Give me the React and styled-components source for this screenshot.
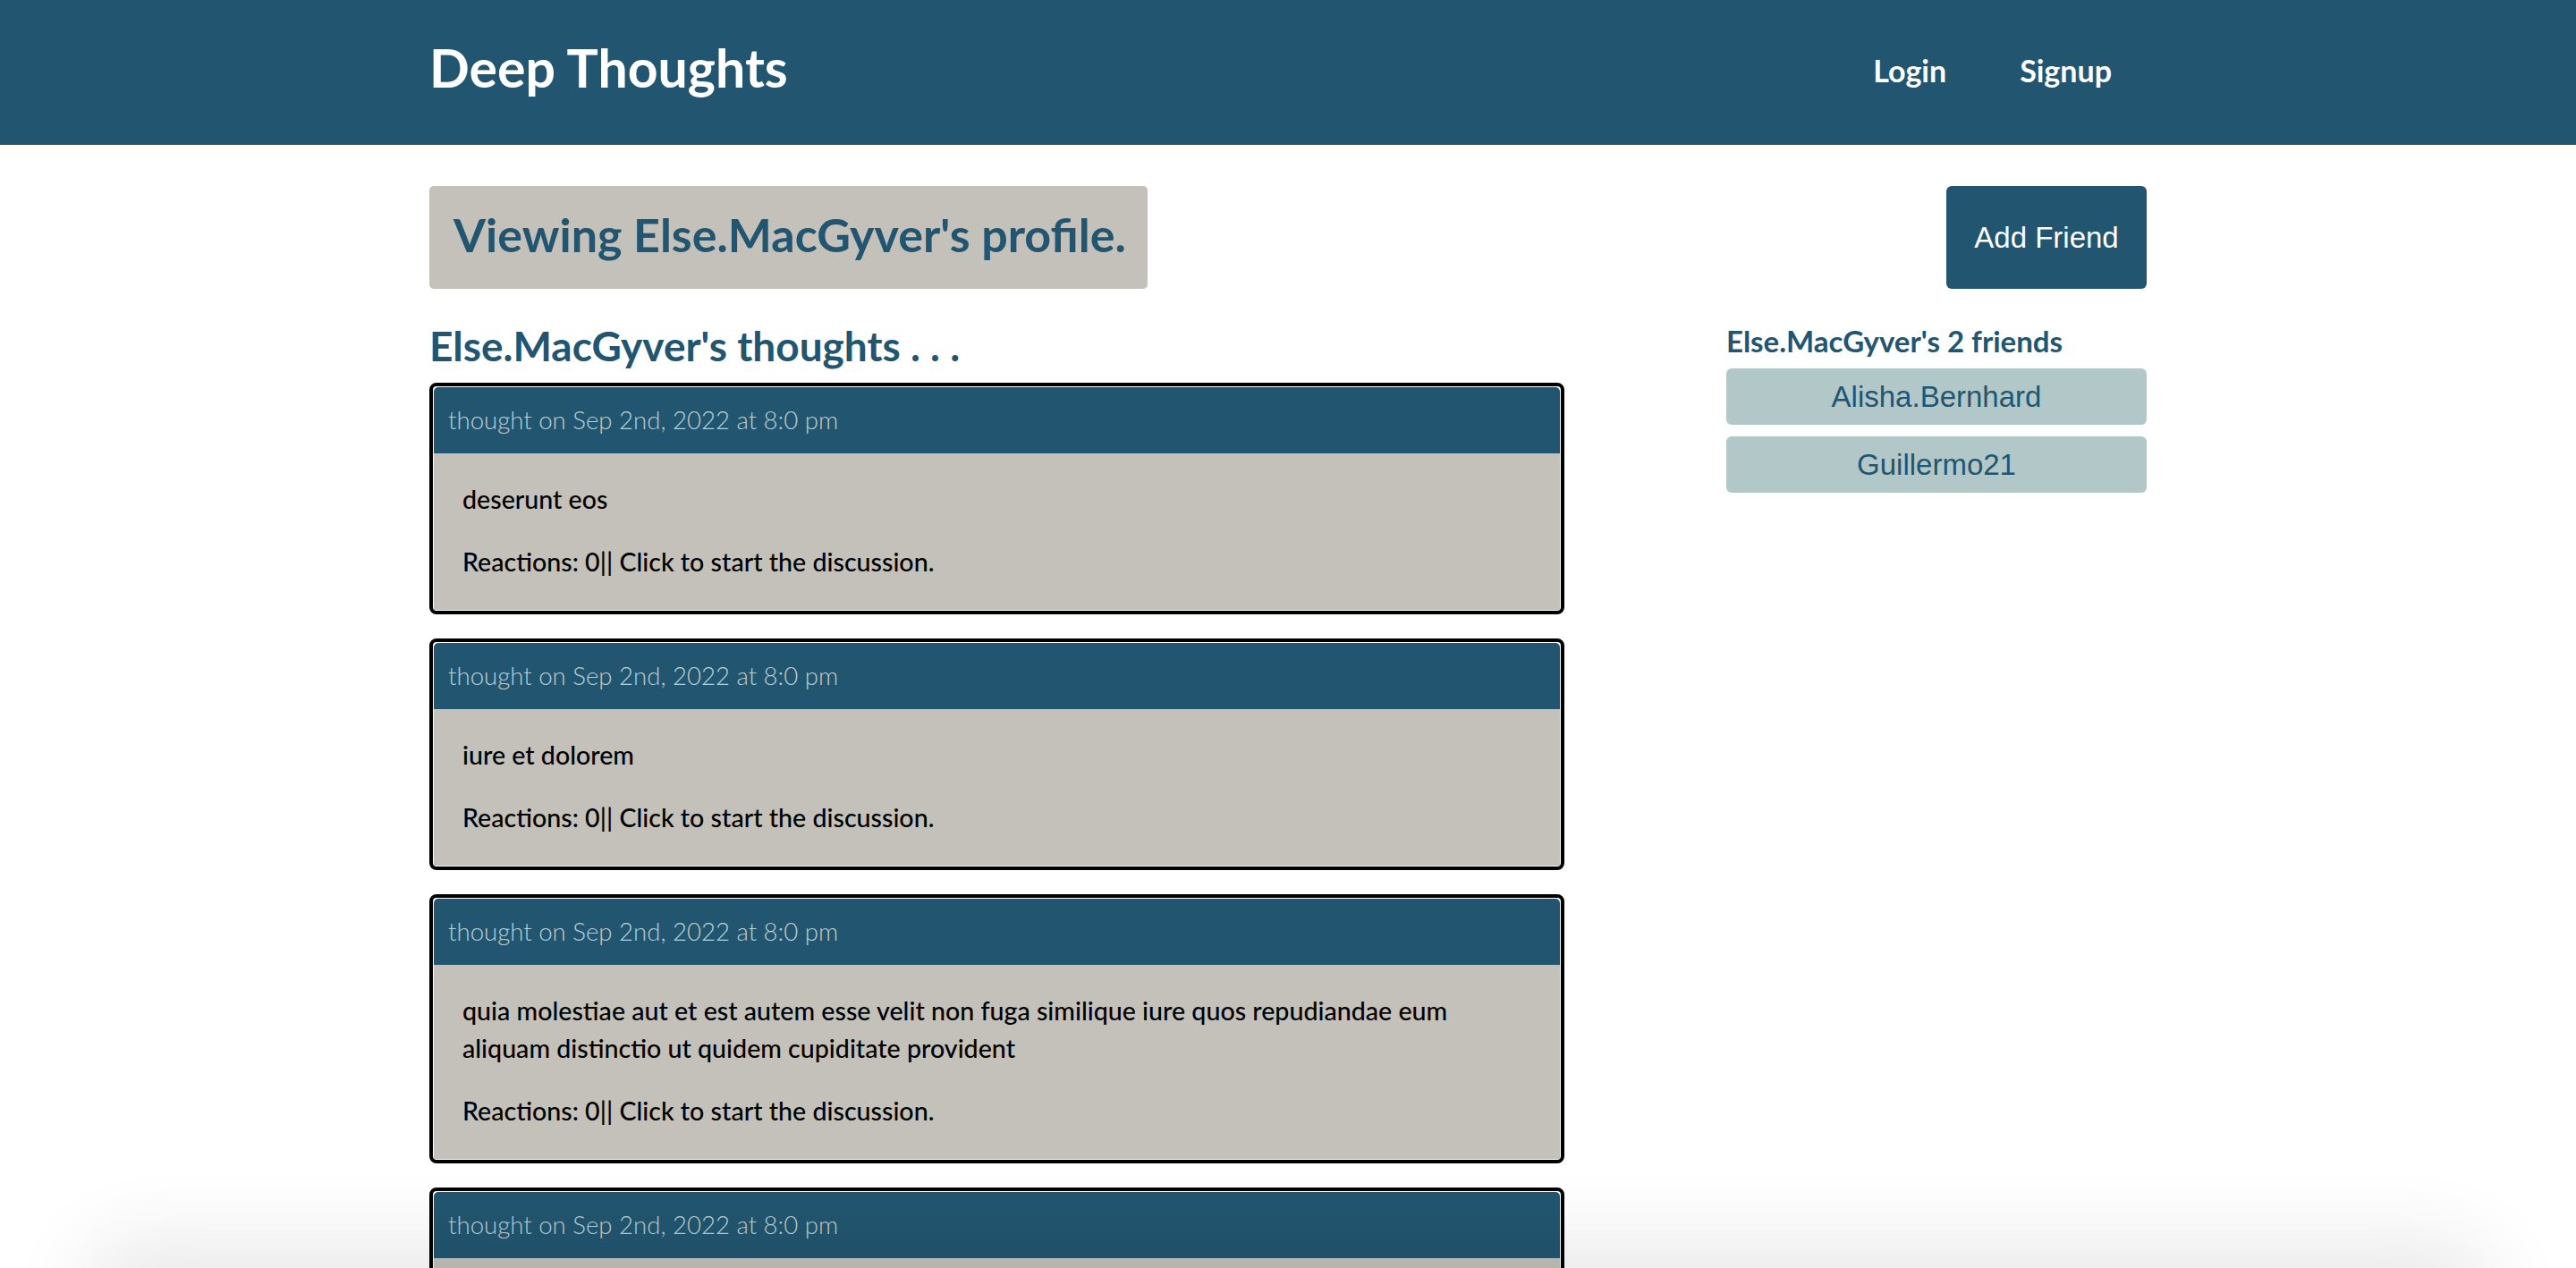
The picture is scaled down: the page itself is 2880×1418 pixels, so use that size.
import React from "react";
import styled, { createGlobalStyle } from "styled-components";

const GlobalStyle = createGlobalStyle`
  * {
    box-sizing: border-box;
  }
  body {
    margin: 0;
    background: #fff;
    font-family: "Lato", "Noto Sans", sans-serif;
  }
`;

const thoughts = [
  { id: 1, text: "deserunt eos" },
  { id: 2, text: "iure et dolorem" },
  {
    id: 3,
    text: "quia molestiae aut et est autem esse velit non fuga similique iure quos repudiandae eum aliquam distinctio ut quidem cupiditate provident",
  },
  { id: 4, text: "voluptatem" },
];

const friends = ["Alisha.Bernhard", "Guillermo21"];

function App() {
  const username = "Else.MacGyver";

  return (
    <>
      <GlobalStyle />
      <Header>
        <div className="container">
          <Logo href="#">Deep Thoughts</Logo>
          <Nav>
            <a href="#">Login</a>
            <a href="#">Signup</a>
          </Nav>
        </div>
      </Header>
      <Main>
        <TopRow>
          <ProfileTitle>Viewing {username}'s profile.</ProfileTitle>
          <AddButton>Add Friend</AddButton>
        </TopRow>
        <Columns>
          <ThoughtColumn>
            <SectionTitle>{username}'s thoughts . . .</SectionTitle>
            {thoughts.map((t) => (
              <Card key={t.id}>
                <CardHeader>thought on Sep 2nd, 2022 at 8:0 pm</CardHeader>
                <CardBody>
                  <p>{t.text}</p>
                  <p>Reactions: 0|| Click to start the discussion.</p>
                </CardBody>
              </Card>
            ))}
          </ThoughtColumn>
          <FriendColumn>
            <FriendTitle>
              {username}'s {friends.length} friends
            </FriendTitle>
            {friends.map((f) => (
              <FriendButton key={f}>{f}</FriendButton>
            ))}
          </FriendColumn>
        </Columns>
      </Main>
      <WindowShadow />
    </>
  );
}

const Header = styled.header`
  background: #225670;
  height: 162px;

  .container {
    width: 1920px;
    margin: 0 auto;
    height: 100%;
    display: flex;
    align-items: center;
    justify-content: space-between;
  }
`;

const Logo = styled.a`
  color: #fff;
  text-decoration: none;
  font-weight: 700;
  font-size: 59px;
  margin-top: -12px;
`;

const Nav = styled.nav`
  display: flex;
  gap: 82px;
  padding-right: 39px;
  margin-top: -6px;

  a {
    color: #fff;
    text-decoration: none;
    font-size: 34px;
    font-weight: 700;
  }
`;

const Main = styled.main`
  width: 1920px;
  margin: 0 auto;
  padding-top: 46px;
`;

const TopRow = styled.div`
  display: flex;
  justify-content: space-between;
  align-items: flex-start;
`;

const ProfileTitle = styled.h2`
  margin: 0;
  background: #c4c1ba;
  color: #225670;
  height: 115px;
  border-radius: 5px;
  padding: 0 24px 8px 27px;
  display: flex;
  align-items: center;
  white-space: nowrap;
  font-size: 52px;
  font-weight: 700;
`;

const AddButton = styled.button`
  background: #225670;
  color: #fff;
  border: none;
  border-radius: 6px;
  width: 224px;
  height: 115px;
  font-family: "Liberation Sans", Arial, sans-serif;
  font-size: 33px;
`;

const Columns = styled.div`
  display: flex;
  justify-content: space-between;
  align-items: flex-start;
  padding-top: 34px;
`;

const ThoughtColumn = styled.section`
  width: 1269px;
`;

const SectionTitle = styled.h3`
  margin: 0 0 11px 0;
  color: #225670;
  font-size: 46px;
  font-weight: 700;
  line-height: 60px;
`;

const Card = styled.div`
  border: 4px solid #000;
  border-radius: 8px;
  background: #fff;
  padding: 1px;
  margin-bottom: 27px;
`;

const CardHeader = styled.div`
  background: #225670;
  color: #bccdd2;
  border-radius: 5px 5px 0 0;
  padding: 16px 16px;
  line-height: 42px;
  font-size: 27.6px;
  font-weight: 300;
`;

const CardBody = styled.div`
  background: #c4c1ba;
  padding: 30px 60px 33px 32px;
  color: #000;
  font-size: 28.6px;
  font-weight: 500;

  p {
    margin: 0;
    line-height: 42px;
  }
  p + p {
    margin-top: 28px;
  }
`;

const FriendColumn = styled.aside`
  width: 470px;
  display: flex;
  flex-direction: column;
  gap: 13px;
  padding-top: 6px;
`;

const FriendTitle = styled.h5`
  margin: 0;
  color: #225670;
  font-size: 33px;
  font-weight: 700;
  line-height: 36px;
`;

const FriendButton = styled.button`
  height: 63px;
  width: 100%;
  border: none;
  border-radius: 6px;
  background: #b2c7c7;
  color: #225670;
  font-family: "Liberation Sans", Arial, sans-serif;
  font-size: 33px;
`;

const WindowShadow = styled.div`
  position: fixed;
  left: 120px;
  right: 120px;
  bottom: -60px;
  height: 60px;
  border-radius: 40px;
  box-shadow: 0 0 90px 30px rgba(0, 0, 0, 0.09);
  pointer-events: none;
`;

export default App;
